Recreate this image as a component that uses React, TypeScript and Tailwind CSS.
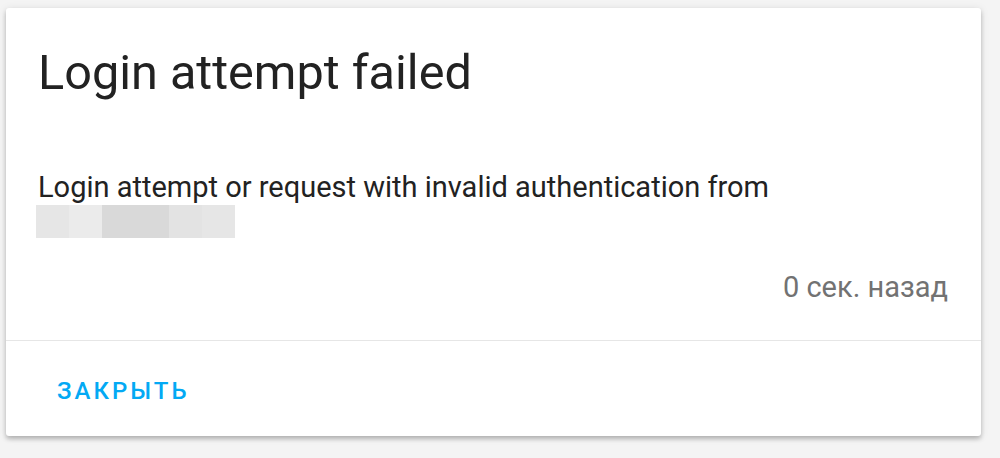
export default function App() {
  const blur = ['#e6e6e6', '#ebebeb', '#d9d9d9', '#d9d9d9', '#e3e3e3', '#e6e6e6'];
  return (
    <div className="w-[1000px] h-[458px] bg-[#f4f4f4] pl-[6px] pt-[8px] overflow-hidden font-['Roboto',sans-serif]">
      <div className="w-[975px] h-[428px] bg-white rounded-[3px] shadow-[0_3px_4px_rgba(0,0,0,0.22),0_1px_8px_rgba(0,0,0,0.1)] flex flex-col">
        {/* Title */}
        <div className="pt-[37px] px-[32px]">
          <h1 className="text-[48.6px] leading-[56px] text-[#222] font-normal">Login attempt failed</h1>
        </div>

        {/* Message */}
        <div className="px-[30px] pt-[71px] pb-[37px]">
          <p className="text-[29px] leading-[31px] text-[#222] pl-[2px]">
            Login attempt or request with invalid authentication from
          </p>
          <div className="flex h-[33px] w-[199px] mt-[2px]">
            {blur.map((c, i) => (
              <div key={i} className="flex-1" style={{ backgroundColor: c }} />
            ))}
          </div>
          <div className="pt-[34px] text-right text-[29px] leading-[31px] text-[#727272] pr-[3px]">
            0 сек. назад
          </div>
        </div>

        {/* Actions */}
        <div className="border-t border-[#e6e6e6] flex-1 flex items-start pt-[36px] pl-[35px]">
          <button className="px-[16px] text-[24px] leading-[28px] font-medium tracking-[3px] text-[#03a9f4] uppercase">
            Закрыть
          </button>
        </div>
      </div>
    </div>
  );
}
